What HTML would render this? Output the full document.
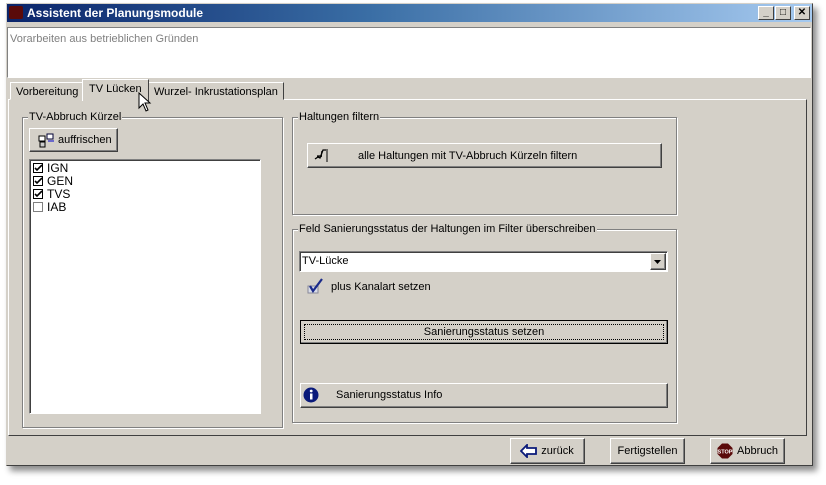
<!DOCTYPE html>
<html><head><meta charset="utf-8"><style>
*{box-sizing:border-box;margin:0;padding:0}
body{width:826px;height:485px;background:#fff;font-family:"Liberation Sans",Arial,sans-serif;font-size:11px;color:#000;position:relative;overflow:hidden}
.a{position:absolute}
.win{left:6px;top:3px;width:807px;height:463px;background:#d4d0c8;border:1px solid #d4d0c8;border-right-color:#404040;border-bottom-color:#404040;box-shadow:4px 5px 6px rgba(0,0,0,.45)}
.title{left:7px;top:4px;width:805px;height:18px;background:linear-gradient(90deg,#0a246a,#3a6ea5 45%,#a6caf0);color:#fff;font-weight:bold;font-size:12px;line-height:18px;padding-left:20px}
.tb{top:6px;width:16px;height:14px;background:#d4d0c8;border:1px solid;border-color:#fff #404040 #404040 #fff;font-size:10px;line-height:12px;text-align:center;font-weight:bold}
.memo{left:7px;top:27px;width:804px;height:51px;background:#fff;border:1px solid;border-color:#808080 #fff #fff #808080;color:#808080;padding:5px 2px;font-size:11px}
.raised{border:1px solid;border-color:#fff #404040 #404040 #fff;box-shadow:inset -1px -1px #808080}
.sunk{border:1px solid;border-color:#808080 #fff #fff #808080;box-shadow:inset 1px 1px #404040}
.grp{border:1px solid #808080;box-shadow:1px 1px #fff,inset 1px 1px #fff}
.lg{background:#d4d0c8;padding:0 1px;top:-7px;left:5px;white-space:nowrap}
.tab{top:80px;height:20px;border:1px solid;border-color:#fff #404040 transparent #fff;line-height:18px;padding:0 5px;background:#d4d0c8}
.btn{background:#d4d0c8;text-align:center;line-height:22px}
.cb{left:3px;width:10px;height:10px;border:1px solid #000;background:#fff}
.cb svg{position:absolute;left:0;top:0}
</style></head><body>
<div class="a win"></div>
<div class="a title">Assistent der Planungsmodule</div>
<div class="a" style="left:9px;top:6px;width:14px;height:13px;background:#5a0a0a;border-radius:2px"></div>
<div class="a tb" style="left:758px">_</div>
<div class="a tb" style="left:775px">□</div>
<div class="a tb" style="left:794px">✕</div>
<div class="a memo">Vorarbeiten aus betrieblichen Gründen</div>

<div class="a" style="left:8px;top:99px;width:799px;height:337px;border:1px solid;border-color:#fff #404040 #404040 #fff"></div>
<div class="a tab" style="left:10px;top:82px;height:18px">Vorbereitung</div>
<div class="a tab" style="left:148px;top:82px;height:18px">Wurzel- Inkrustationsplan</div>
<div class="a tab" style="left:82px;top:79px;height:22px;border-bottom:none;padding:0 6px;line-height:18px">TV Lücken</div>
<!-- cursor -->
<svg class="a" style="left:138px;top:92px" width="14" height="22"><path d="M1 1 L1 16 L5 12 L8 19 L10 18 L7 11 L12 11 Z" fill="#fff" stroke="#000" stroke-width="1"/></svg>

<!-- group 1 -->
<div class="a grp" style="left:22px;top:117px;width:261px;height:311px"><span class="a lg">TV-Abbruch Kürzel</span></div>
<div class="a btn raised" style="left:29px;top:128px;width:89px;height:24px;text-align:left;padding-left:28px">auffrischen</div>
<svg class="a" style="left:37px;top:132px" width="18" height="16"><path d="M2 4h6v5H2z" fill="#fff" stroke="#000"/><path d="M10 2h6v5h-6z" fill="#fff" stroke="#003"/><path d="M3 10h5v5H3z" fill="#ccc" stroke="#000"/><path d="M11 9h6" stroke="#00c"/></svg>
<div class="a sunk" style="left:29px;top:159px;width:232px;height:255px;background:#fff">
 <div class="a cb" style="top:3px"><svg width="9" height="9"><path d="M1 4l2 2 5-5" stroke="#000" stroke-width="1.6" fill="none"/></svg></div><span class="a" style="left:17px;top:1px;font-size:12px">IGN</span>
 <div class="a cb" style="top:16px"><svg width="9" height="9"><path d="M1 4l2 2 5-5" stroke="#000" stroke-width="1.6" fill="none"/></svg></div><span class="a" style="left:17px;top:14px;font-size:12px">GEN</span>
 <div class="a cb" style="top:29px"><svg width="9" height="9"><path d="M1 4l2 2 5-5" stroke="#000" stroke-width="1.6" fill="none"/></svg></div><span class="a" style="left:17px;top:27px;font-size:12px">TVS</span>
 <div class="a cb" style="top:42px;border-color:#808080"></div><span class="a" style="left:17px;top:40px;font-size:12px">IAB</span>
</div>

<!-- group 2 -->
<div class="a grp" style="left:292px;top:117px;width:385px;height:98px"><span class="a lg">Haltungen filtern</span></div>
<div class="a btn raised" style="left:307px;top:143px;width:355px;height:25px;padding-left:0"><span class="a" style="left:50px;top:1px">alle Haltungen mit TV-Abbruch Kürzeln filtern</span></div>
<svg class="a" style="left:313px;top:147px" width="16" height="16"><path d="M2 12l3-2 2 1 3-8 3 0M9 4l-1 6M4 9h5" stroke="#000" stroke-width="1.3" fill="none"/><path d="M14 2v13" stroke="#000"/></svg>

<!-- group 3 -->
<div class="a grp" style="left:292px;top:229px;width:385px;height:194px"><span class="a lg">Feld Sanierungsstatus der Haltungen im Filter überschreiben</span></div>
<div class="a sunk" style="left:299px;top:251px;width:369px;height:21px;background:#fff;padding:2px 2px;font-size:11px;line-height:15px">TV-Lücke</div>
<div class="a raised" style="left:650px;top:253px;width:16px;height:17px;background:#d4d0c8"><svg width="14" height="15"><path d="M3 6h7l-3.5 4z" fill="#000"/></svg></div>
<svg class="a" style="left:307px;top:278px" width="20" height="16"><path d="M1 8h10v7H1z" fill="#d8dce8" stroke="#889"/><path d="M3 8l3 5 9-12" stroke="#1a2a8a" stroke-width="2.2" fill="none"/></svg>
<span class="a" style="left:331px;top:281px">plus Kanalart setzen</span>
<div class="a btn raised" style="left:300px;top:320px;width:368px;height:24px;outline:1px solid #000;outline-offset:-1px;line-height:22px"><div class="a" style="left:3px;top:3px;right:3px;bottom:3px;border:1px dotted #000"></div>Sanierungsstatus setzen</div>
<div class="a btn raised" style="left:300px;top:383px;width:368px;height:25px;text-align:left;padding-left:35px">Sanierungsstatus Info</div>
<svg class="a" style="left:303px;top:387px" width="16" height="16"><circle cx="8" cy="8" r="7.5" fill="#0a1a7a"/><rect x="7" y="6.5" width="2.5" height="6" fill="#fff"/><circle cx="8.2" cy="4" r="1.4" fill="#fff"/></svg>

<!-- bottom -->
<div class="a raised btn" style="left:510px;top:438px;width:75px;height:26px;line-height:24px;padding-left:20px">zurück</div>
<svg class="a" style="left:520px;top:444px" width="18" height="14"><path d="M1 7l6-6v3h9v6H7v3z" fill="#fff" stroke="#0a1a7a" stroke-width="1.8"/></svg>
<div class="a raised btn" style="left:610px;top:438px;width:75px;height:26px;line-height:24px">Fertigstellen</div>
<div class="a raised btn" style="left:710px;top:438px;width:75px;height:26px;line-height:24px;padding-left:20px">Abbruch</div>
<svg class="a" style="left:717px;top:443px" width="16" height="16"><polygon points="5,0.5 11,0.5 15.5,5 15.5,11 11,15.5 5,15.5 0.5,11 0.5,5" fill="#5a0a0a"/><text x="8" y="10.5" font-size="5.5" fill="#fff" text-anchor="middle" font-weight="bold" font-family="Liberation Sans">STOP</text></svg>
</body></html>
